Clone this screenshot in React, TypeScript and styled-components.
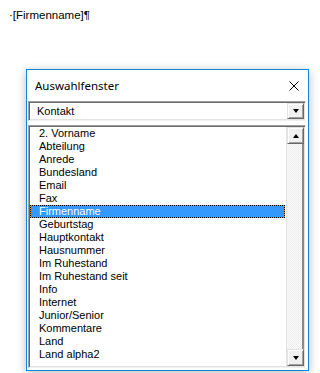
import React from "react";
import styled, { createGlobalStyle } from "styled-components";

const GlobalStyle = createGlobalStyle`
  html, body {
    margin: 0;
    background: #ffffff;
  }
  body {
    width: 320px;
    height: 373px;
    overflow: hidden;
    font-family: "Liberation Sans", Arial, sans-serif;
  }
`;

const Page = styled.div`
  display: flex;
  flex-direction: column;
  padding: 7px 0 0 9px;
`;

const DocLine = styled.div`
  font-size: 11.5px;
  line-height: 16px;
  color: #000;
`;

const Window = styled.div`
  margin: 46px 0 0 17px;
  width: 283px;
  height: 302px;
  box-sizing: border-box;
  border: 1px solid #1883d7;
  background: #ffffff;
  box-shadow: 0 2px 9px rgba(0, 0, 0, 0.28);
  display: flex;
  flex-direction: column;
`;

const TitleBar = styled.div`
  height: 31px;
  display: flex;
  align-items: center;
  justify-content: space-between;
  padding: 0 9px 0 8px;
  font-family: "Noto Sans", "Open Sans", sans-serif;
  font-size: 11.5px;
  color: #000;
`;

const CloseIcon = styled.svg`
  width: 10px;
  height: 10px;
  display: block;
`;

const Body = styled.div`
  display: flex;
  flex-direction: column;
  gap: 4px;
  padding: 0 1px;
`;

const Sunken = styled.div`
  box-sizing: border-box;
  border-style: solid;
  border-width: 1px;
  border-color: #a0a0a0 #ffffff #f0f0f0 #a0a0a0;
  box-shadow: inset 1px 1px 0 #696969, inset -1px -1px 0 #e3e3e3;
  background: #ffffff;
  width: 278px;
  padding: 1px;
`;

const Combo = styled(Sunken)`
  height: 20px;
  display: flex;
  align-items: stretch;
`;

const ComboText = styled.div`
  flex: 1;
  font-size: 11px;
  line-height: 16px;
  padding-left: 7px;
  color: #000;
`;

const ArrowButton = styled.div<{ $dir: "up" | "down" }>`
  width: 17px;
  height: 16px;
  box-sizing: border-box;
  background: #f0f0f0;
  border-style: solid;
  border-width: 1px;
  border-color: #e3e3e3 #696969 #696969 #e3e3e3;
  box-shadow: inset 1px 1px 0 #ffffff, inset -1px -1px 0 #a0a0a0;
  display: flex;
  align-items: center;
  justify-content: center;
  flex-shrink: 0;

  &::after {
    content: "";
    width: 0;
    height: 0;
    border-left: 3.5px solid transparent;
    border-right: 3.5px solid transparent;
    ${(p) =>
      p.$dir === "down"
        ? "border-top: 4px solid #000;"
        : "border-bottom: 4px solid #000;"}
  }
`;

const ScrollButton = styled(ArrowButton)`
  height: 17px;
`;

const List = styled(Sunken)`
  height: 243px;
  display: flex;
  overflow: hidden;
`;

const Items = styled.div`
  flex: 1;
  display: flex;
  flex-direction: column;
`;

const Item = styled.div<{ $selected?: boolean }>`
  height: 13px;
  line-height: 13px;
  font-size: 11px;
  padding-left: 9px;
  margin-right: 1px;
  white-space: nowrap;
  color: ${(p) => (p.$selected ? "#ffffff" : "#000000")};
  background: ${(p) => (p.$selected ? "#3399ff" : "transparent")};
  ${(p) =>
    p.$selected
      ? `
    box-shadow: inset 0 0 0 1px #e08a1e;
    outline: 1px dotted #000;
    outline-offset: -1px;
  `
      : ""}
`;

const Scrollbar = styled.div`
  width: 17px;
  display: flex;
  flex-direction: column;
  border-left: 1px solid #e3e3e3;
`;

const Track = styled.div`
  flex: 1;
  border-right: 2px solid #8a8a8a;
  background-color: #f4f4f4;
  background-image: conic-gradient(
    #ececec 25%,
    #fcfcfc 0 50%,
    #ececec 0 75%,
    #fcfcfc 0
  );
  background-size: 2px 2px;
`;

const fields = [
  "2. Vorname",
  "Abteilung",
  "Anrede",
  "Bundesland",
  "Email",
  "Fax",
  "Firmenname",
  "Geburtstag",
  "Hauptkontakt",
  "Hausnummer",
  "Im Ruhestand",
  "Im Ruhestand seit",
  "Info",
  "Internet",
  "Junior/Senior",
  "Kommentare",
  "Land",
  "Land alpha2",
];

const App = () => {
  const selected = "Firmenname";

  return (
    <>
      <GlobalStyle />
      <Page>
        <DocLine>·[Firmenname]¶</DocLine>
        <Window>
          <TitleBar>
            <span>Auswahlfenster</span>
            <CloseIcon viewBox="0 0 10 10">
              <path d="M0.5 0.5 L9.5 9.5 M9.5 0.5 L0.5 9.5" stroke="#000" strokeWidth="1" fill="none" />
            </CloseIcon>
          </TitleBar>
          <Body>
            <Combo>
              <ComboText>Kontakt</ComboText>
              <ArrowButton $dir="down" />
            </Combo>
            <List>
              <Items>
                {fields.map((f) => (
                  <Item key={f} $selected={f === selected}>
                    {f}
                  </Item>
                ))}
              </Items>
              <Scrollbar>
                <ScrollButton $dir="up" />
                <Track />
                <ScrollButton $dir="down" />
              </Scrollbar>
            </List>
          </Body>
        </Window>
      </Page>
    </>
  );
};

export default App;
